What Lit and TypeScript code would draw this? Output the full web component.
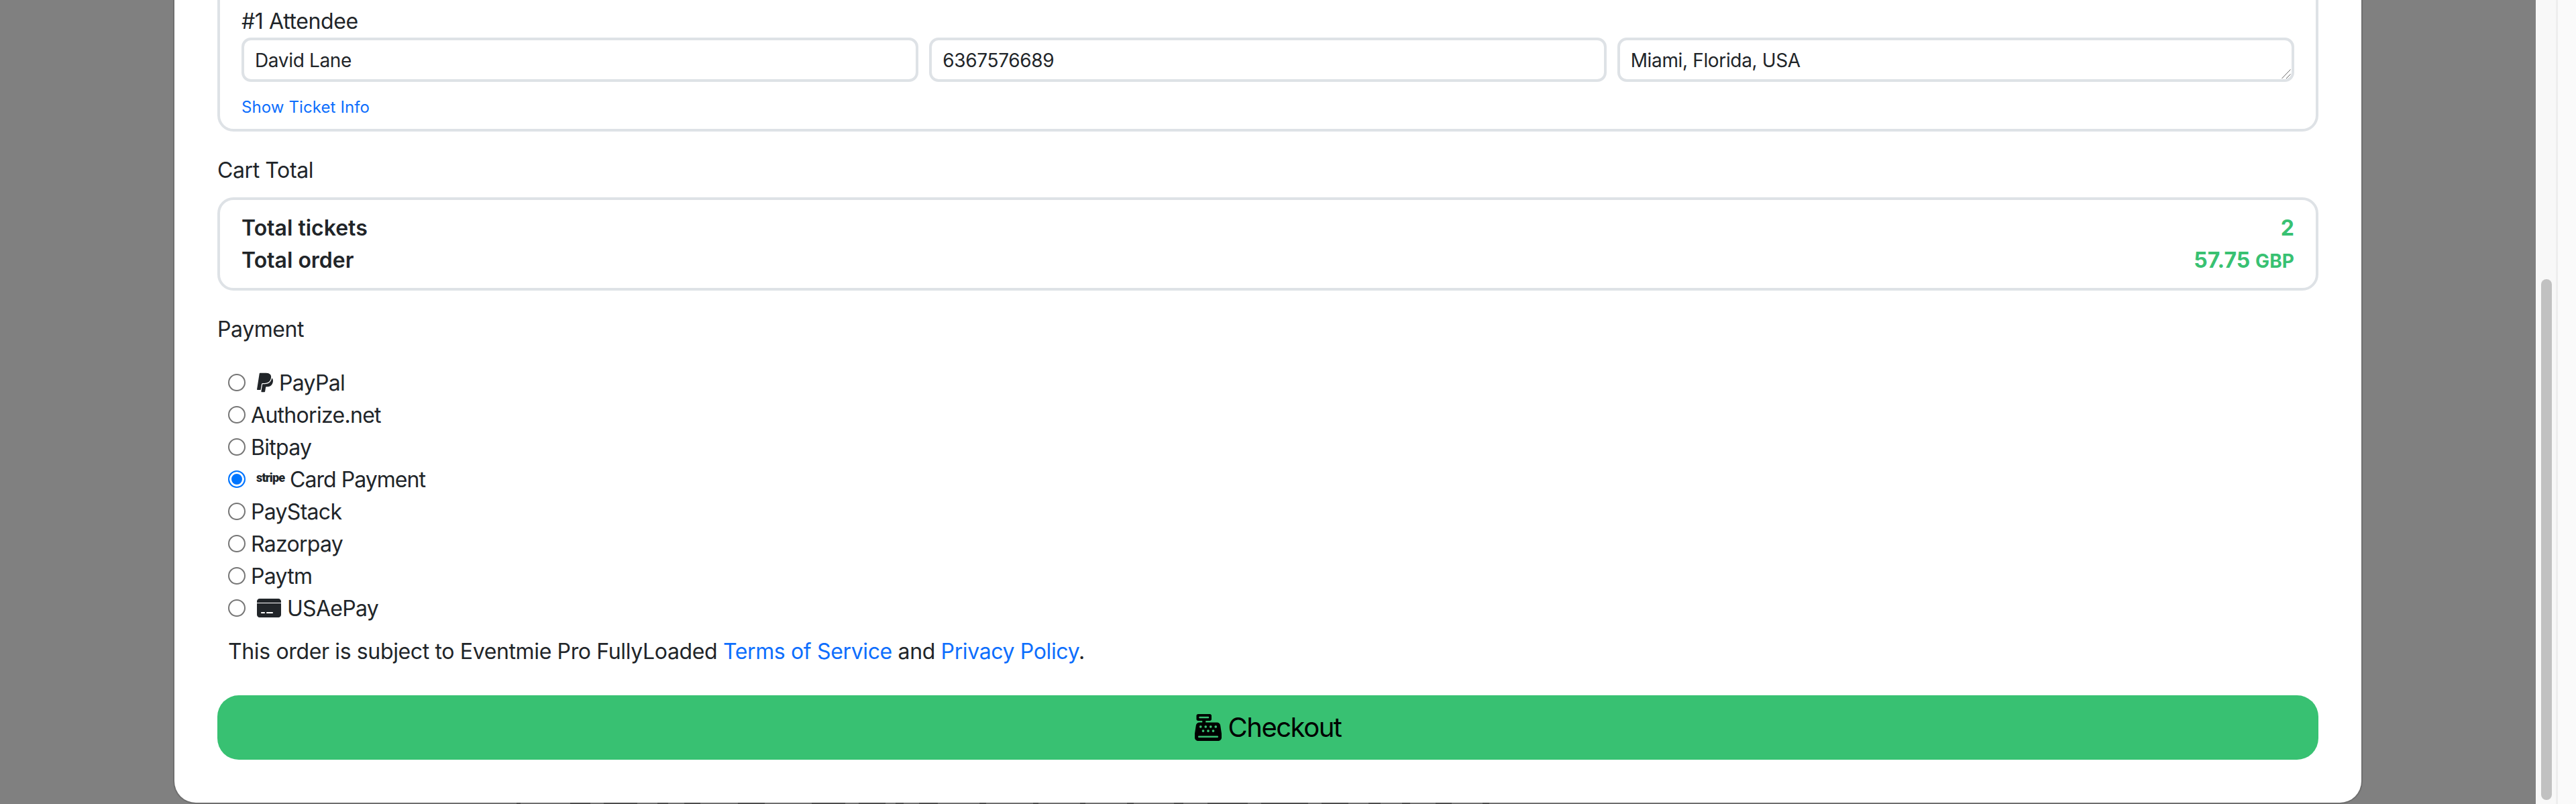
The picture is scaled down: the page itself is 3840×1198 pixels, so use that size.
import { LitElement, html, css, svg } from "lit";
import { customElement } from "lit/decorators.js";

const PAYPAL = "M111.4 295.9c-3.5 19.2-17.4 108.7-21.5 134-.3 1.8-1 2.5-3 2.5H12.3c-7.6 0-13.1-6.6-12.1-13.9L58.8 46.6c1.5-9.6 10.1-16.9 20-16.9 152.3 0 165.1-3.7 204 11.4 60.1 23.3 65.6 79.5 44 140.3-21.5 62.6-72.5 89.5-140.1 90.3-43.4.7-69.5-7-75.3 24.2zM357.1 152c-1.8-1.3-2.5-1.8-3 1.3-2 11.4-5.1 22.5-8.8 33.6-39.9 113.8-150.5 103.9-204.5 103.9-6.1 0-10.1 3.3-10.9 9.4-22.6 140.4-27.1 169.7-27.1 169.7-1 7.1 3.5 12.9 10.6 12.9h63.5c8.6 0 15.7-6.3 17.4-14.9.7-5.4-1.1 6.1 14.4-91.3 4.6-22 14.3-19.7 29.3-19.7 71 0 126.4-28.8 142.9-112.3 6.5-34.8 4.6-71.4-23.8-92.6z";
const REGISTER = "M64 0C46.3 0 32 14.3 32 32V96c0 17.7 14.3 32 32 32h80v32H87c-31.6 0-58.5 23.1-63.3 54.4L1.1 364.1C.4 368.8 0 373.6 0 378.4V448c0 35.3 28.7 64 64 64H448c35.3 0 64-28.7 64-64V378.4c0-4.8-.4-9.6-1.1-14.4L488.2 214.4C483.5 183.1 456.6 160 425 160H208V128h80c17.7 0 32-14.3 32-32V32c0-17.7-14.3-32-32-32H64zM96 48H256c8.8 0 16 7.2 16 16s-7.2 16-16 16H96c-8.8 0-16-7.2-16-16s7.2-16 16-16zM64 432c0-8.8 7.2-16 16-16H432c8.8 0 16 7.2 16 16s-7.2 16-16 16H80c-8.8 0-16-7.2-16-16zm48-168a24 24 0 1 1 0-48 24 24 0 1 1 0 48zm120-24a24 24 0 1 1 -48 0 24 24 0 1 1 48 0zM160 344a24 24 0 1 1 0-48 24 24 0 1 1 0 48zM328 240a24 24 0 1 1 -48 0 24 24 0 1 1 48 0zM256 344a24 24 0 1 1 0-48 24 24 0 1 1 0 48zM424 240a24 24 0 1 1 -48 0 24 24 0 1 1 48 0zM352 344a24 24 0 1 1 0-48 24 24 0 1 1 0 48z";
const CARD = "M64 32C28.7 32 0 60.7 0 96v32H576V96c0-35.3-28.7-64-64-64H64zM576 144H0V416c0 35.3 28.7 64 64 64H512c35.3 0 64-28.7 64-64V144zM112 352h64c8.8 0 16 7.2 16 16s-7.2 16-16 16H112c-8.8 0-16-7.2-16-16s7.2-16 16-16zm112 16c0-8.8 7.2-16 16-16H368c8.8 0 16 7.2 16 16s-7.2 16-16 16H240c-8.8 0-16-7.2-16-16z";

/* Fragments of the page behind the modal that show in the last two rows. */
const PEEK: [number, number][] = [
  [510, 6], [590, 30], [640, 50], [720, 16], [760, 24], [840, 40], [950, 50], [1020, 40],
  [1075, 12], [1110, 28], [1200, 10], [1280, 8], [1350, 8], [1420, 10], [1490, 14],
  [1540, 60], [1620, 70], [1710, 40], [1780, 18], [1830, 12], [1880, 24], [1950, 10],
];

@customElement("app-root")
export class AppRoot extends LitElement {
  static styles = css`
    :host {
      display: flex;
      width: 3840px;
      height: 1198px;
      overflow: hidden;
      font-family: Inter, "Liberation Sans", sans-serif;
      font-size: 32px;
      line-height: 48px;
      color: #212529;
      letter-spacing: -0.4px;
    }
    .stage {
      flex: 0 0 3780px;
      height: 1198px;
      background: #808080;
      padding-left: 260px;
      box-sizing: border-box;
    }
    .modal {
      width: 3260px;
      height: 1196px;
      box-sizing: border-box;
      background: #fff;
      border-radius: 0 0 32px 32px;
      box-shadow: 0 0 0 2px rgba(0, 0, 0, 0.14);
      padding: 0 64px;
      display: flex;
      flex-direction: column;
    }
    .peek {
      display: block;
      width: 3260px;
      height: 2px;
    }
    .peek rect {
      fill: #4c4c4c;
    }
    .card {
      border: 4px solid #dee2e6;
      border-radius: 24px;
      padding: 4px 32px;
    }
    .attendees {
      border-top: 0;
      border-radius: 0 0 24px 24px;
      height: 196px;
      box-sizing: border-box;
      padding-top: 8px;
      flex: none;
    }
    .attendee-title {
      height: 48px;
    }
    .fields {
      display: grid;
      grid-template-columns: repeat(3, 1fr);
      column-gap: 16px;
    }
    input[type="text"],
    textarea {
      box-sizing: border-box;
      display: block;
      width: 100%;
      height: 66px;
      margin: 0;
      padding: 13px 16px 11px;
      border: 4px solid #dee2e6;
      border-radius: 14px;
      font: inherit;
      font-size: 28px;
      line-height: 34px;
      letter-spacing: -0.35px;
      color: #212529;
      background: #fff;
      outline: none;
    }
    .address {
      position: relative;
    }
    textarea {
      resize: none;
      overflow: hidden;
    }
    .grip {
      position: absolute;
      right: 5px;
      bottom: 5px;
      width: 14px;
      height: 14px;
      display: block;
      stroke: #666;
      stroke-width: 1;
      fill: none;
    }
    a {
      color: #0d6efd;
      text-decoration: none;
    }
    .ticket-link {
      display: block;
      font-size: 24px;
      line-height: 36px;
      margin-top: 20px;
      letter-spacing: 0.1px;
    }
    .section-label {
      height: 48px;
      flex: none;
    }
    .cart-label {
      margin-top: 34px;
    }
    .totals {
      margin-top: 16px;
      height: 139px;
      box-sizing: border-box;
      padding-top: 18px;
      font-weight: 600;
      letter-spacing: 0;
      flex: none;
    }
    .row {
      display: flex;
      justify-content: space-between;
    }
    .amount {
      color: #38c172;
      font-weight: 700;
      letter-spacing: 0.1px;
    }
    .amount small {
      font-size: 28px;
    }
    .pay-label {
      margin-top: 34px;
    }
    .methods {
      margin-top: 32px;
      padding-left: 16px;
      letter-spacing: -0.7px;
      flex: none;
    }
    .method {
      display: flex;
      align-items: center;
      height: 48px;
    }
    .method input {
      appearance: none;
      -webkit-appearance: none;
      width: 26px;
      height: 26px;
      margin: -2px 8px 0 0;
      box-sizing: border-box;
      border: 2px solid #767676;
      border-radius: 50%;
      background: #fff;
      flex: none;
    }
    .method input:checked {
      border: 2.5px solid #0075ff;
      background: #0075ff;
      box-shadow: inset 0 0 0 3px #fff;
    }
    .glyph {
      display: block;
      fill: #212529;
      flex: none;
      margin: -2px 9px 0 9px;
    }
    .stripe {
      font-family: Roboto, sans-serif;
      font-weight: 900;
      font-size: 18px;
      letter-spacing: -0.8px;
      line-height: 24px;
      width: 41px;
      margin: -6px 9px 0 8px;
      flex: none;
    }
    .card-label {
      letter-spacing: -0.95px;
    }
    .terms {
      margin: 16px 0 0 16px;
      letter-spacing: -0.36px;
      flex: none;
    }
    .checkout {
      margin-top: 41px;
      height: 96px;
      flex: none;
      border: 0;
      border-radius: 32px;
      background: #38c172;
      color: #000;
      font: inherit;
      font-size: 40px;
      letter-spacing: -1.5px;
      display: flex;
      align-items: center;
      justify-content: center;
      gap: 10px;
      padding: 0;
    }
    .checkout svg {
      display: block;
      width: 40px;
      height: 40px;
    }
    .track {
      flex: 0 0 30px;
      height: 1198px;
      box-sizing: border-box;
      background: #f8f8f8;
      border-right: 3px solid #eeeeee;
      padding: 416px 6px 6px 8px;
    }
    .thumb {
      width: 16px;
      height: 776px;
      background: #c1c1c1;
      border-radius: 8px;
    }
    .track-outer {
      flex: 0 0 30px;
      height: 1198px;
      background: #fafafa;
    }
  `;

  render() {
    return html`
      <div class="stage">
        <div class="modal">
          <div class="card attendees">
            <div class="attendee-title">#1 Attendee</div>
            <div class="fields">
              <input type="text" .value=${"David Lane"} />
              <input type="text" .value=${"6367576689"} />
              <div class="address">
                <textarea .value=${"Miami, Florida, USA"}></textarea>
                <svg class="grip" viewBox="0 0 14 14"><path d="M0.5 14 L13.5 0.5 M7 14 L13.5 7.5" /></svg>
              </div>
            </div>
            <a class="ticket-link" href="#">Show Ticket Info</a>
          </div>

          <div class="section-label cart-label">Cart Total</div>
          <div class="card totals">
            <div class="row"><span>Total tickets</span><span class="amount">2</span></div>
            <div class="row"><span>Total order</span><span class="amount">57.75 <small>GBP</small></span></div>
          </div>

          <div class="section-label pay-label">Payment</div>
          <div class="methods">
            <label class="method">
              <input type="radio" name="pay" />
              <svg class="glyph" width="24" height="32" viewBox="0 0 384 512"><path d=${PAYPAL} /></svg>
              PayPal
            </label>
            <label class="method"><input type="radio" name="pay" />Authorize.net</label>
            <label class="method"><input type="radio" name="pay" />Bitpay</label>
            <label class="method">
              <input type="radio" name="pay" checked />
              <span class="stripe">stripe</span>
              <span class="card-label">Card Payment</span>
            </label>
            <label class="method"><input type="radio" name="pay" />PayStack</label>
            <label class="method"><input type="radio" name="pay" />Razorpay</label>
            <label class="method"><input type="radio" name="pay" />Paytm</label>
            <label class="method">
              <input type="radio" name="pay" />
              <svg class="glyph" width="36" height="32" viewBox="0 0 576 512"><path d=${CARD} /></svg>
              USAePay
            </label>
          </div>
          <div class="terms">
            This order is subject to Eventmie Pro FullyLoaded
            <a href="#">Terms of Service</a> and <a href="#">Privacy Policy</a>.
          </div>
          <button class="checkout">
            <svg viewBox="0 0 512 512"><path d=${REGISTER} /></svg>
            <span>Checkout</span>
          </button>
        </div>
        <svg class="peek" viewBox="0 0 3260 2">
          ${PEEK.map(([x, w]) => svg`<rect x=${x} y="0" width=${w} height="2" />`)}
        </svg>
      </div>
      <div class="track"><div class="thumb"></div></div>
      <div class="track-outer"></div>
    `;
  }
}
